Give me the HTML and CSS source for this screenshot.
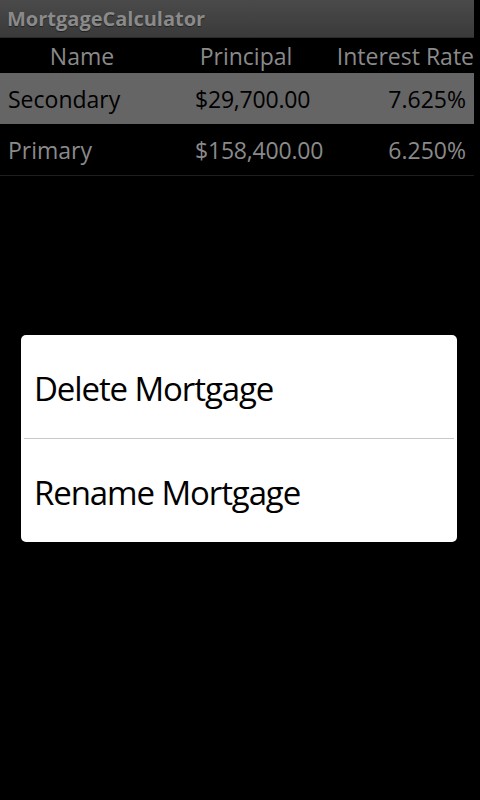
FILE: index.html
```html
<!DOCTYPE html>
<html>
<head>
<meta charset="utf-8">
<link rel="stylesheet" href="styles.css">
</head>
<body>
<div class="screen">
  <div class="titlebar">MortgageCalculator</div>
  <div class="table">
    <div class="row header">
      <div class="cell c-name">Name</div>
      <div class="cell c-principal">Principal</div>
      <div class="cell c-rate">Interest Rate</div>
    </div>
    <div class="row data selected">
      <div class="cell c-name">Secondary</div>
      <div class="cell c-principal">$29,700.00</div>
      <div class="cell c-rate">7.625%</div>
    </div>
    <div class="row data">
      <div class="cell c-name">Primary</div>
      <div class="cell c-principal">$158,400.00</div>
      <div class="cell c-rate">6.250%</div>
    </div>
  </div>
</div>
<div class="overlay">
  <div class="dialog">
    <div class="item">Delete Mortgage</div>
    <div class="divider"></div>
    <div class="item">Rename Mortgage</div>
  </div>
</div>
</body>
</html>
```
FILE: styles.css
```css
html, body {
  margin: 0;
  padding: 0;
  background: #000;
  width: 480px;
  height: 800px;
  overflow: hidden;
  font-family: "Open Sans", "DejaVu Sans", sans-serif;
}
.screen {
  width: 474px;
}
.titlebar {
  height: 37px;
  background: linear-gradient(#4a4a4a, #3a3a3a);
  border-bottom: 1px solid #2a2a2a;
  color: #8a8a8a;
  font-weight: bold;
  font-size: 20px;
  line-height: 37px;
  padding-left: 7px;
  letter-spacing: 0;
  text-shadow: 0 1px 1px #222;
}
.row {
  display: grid;
  grid-template-columns: 164px 164px 1fr;
  align-items: center;
}
.header {
  height: 35px;
  color: #8a8a8a;
  font-size: 23px;
}
.header .cell { text-align: center; }
.header .c-rate { text-align: right; }
.data {
  height: 51px;
  font-size: 23px;
  color: #8a8a8a;
  border-bottom: 1px solid #1e1e1e;
}
.data.selected {
  background: #656565;
  color: #000;
  border-bottom: none;
}
.data .c-name { padding-left: 8px; }
.data .c-principal { padding-left: 31px; letter-spacing: -0.2px; }
.data .c-rate { text-align: right; padding-right: 8px; }
.overlay {
  position: absolute;
  left: 0;
  top: 0;
  width: 480px;
  height: 800px;
}
.dialog {
  position: absolute;
  left: 21px;
  top: 335px;
  width: 436px;
  background: #fff;
  border-radius: 5px;
}
.item {
  height: 103px;
  display: flex;
  align-items: center;
  padding-left: 13px;
  padding-top: 4px;
  box-sizing: border-box;
  font-size: 33px;
  letter-spacing: -1.1px;
  color: #000;
}
.divider {
  height: 1px;
  margin: 0 3px;
  background: #c8c8c8;
}
```
